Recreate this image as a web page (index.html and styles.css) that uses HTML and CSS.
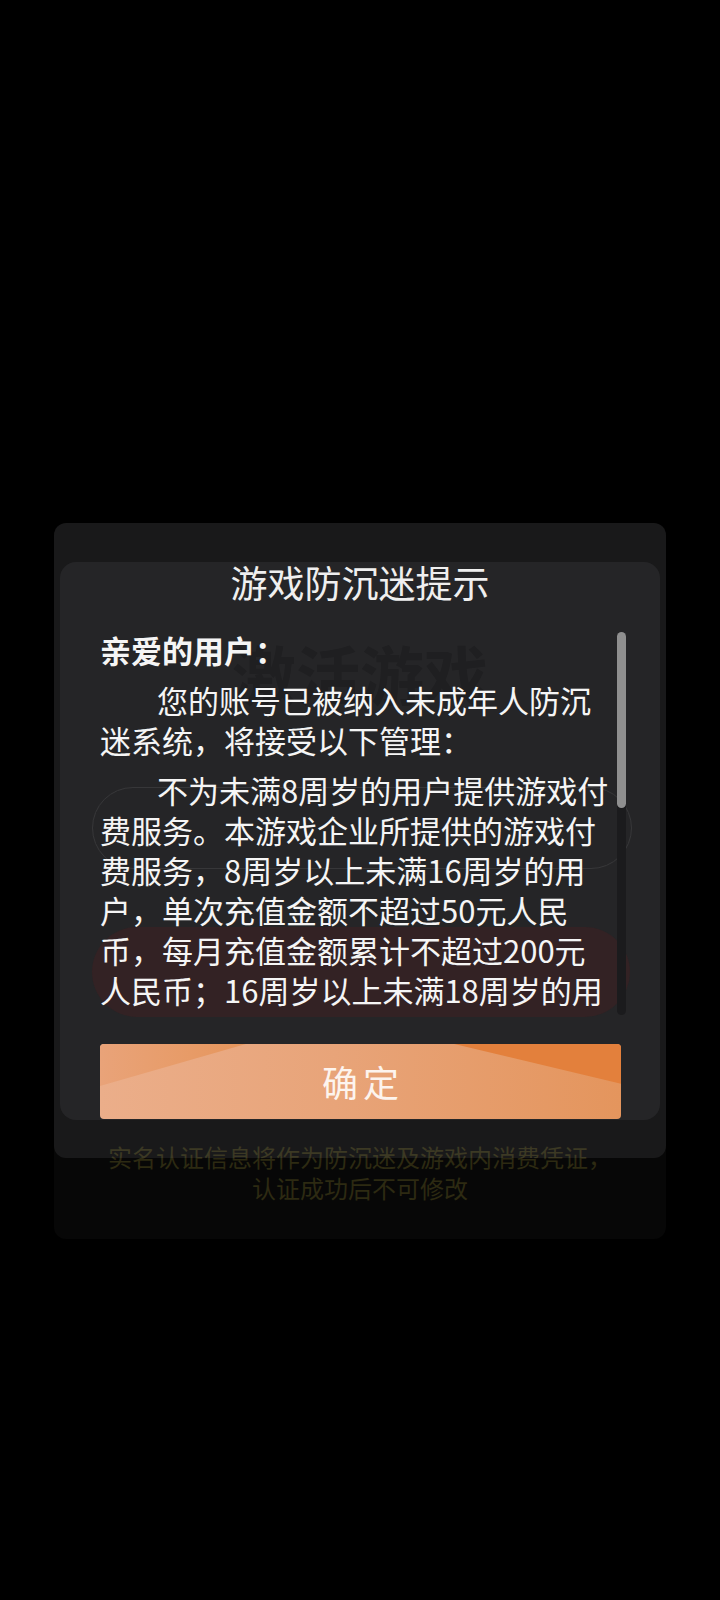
FILE: index.html
```html
<!DOCTYPE html>
<html lang="zh-CN">
<head>
<meta charset="utf-8">
<title>游戏防沉迷提示</title>
<link rel="stylesheet" href="styles.css">
</head>
<body>
<div class="screen">
  <div class="backdrop">
    <div class="bd-title">激活游戏</div>
    <div class="bd-input"></div>
    <div class="bd-pill"></div>
    <p class="bd-note">实名认证信息将作为防沉迷及游戏内消费凭证，<br>认证成功后不可修改</p>
  </div>

  <div class="dialog">
    <div class="sheet">
      <div class="sheet-title">游戏防沉迷提示</div>
      <div class="body-row">
        <div class="scroll-text">
          <p class="greet">亲爱的用户：</p>
          <p class="indent">您的账号已被纳入未成年人防沉<br>迷系统，将接受以下管理：</p>
          <p class="indent">不为未满8周岁的用户提供游戏付<br>费服务。本游戏企业所提供的游戏付<br>费服务，8周岁以上未满16周岁的用<br>户，单次充值金额不超过50元人民<br>币，每月充值金额累计不超过200元<br>人民币；16周岁以上未满18周岁的用<br>户，单次充值金额不超过100元人民<br>币，每月充值金额累计不超过400元<br>人民币。</p>
        </div>
        <div class="scrollbar"><div class="thumb"></div></div>
      </div>
      <div class="confirm"><span class="confirm-label">确定</span></div>
    </div>
  </div>
</div>
</body>
</html>
```
FILE: styles.css
```css
html, body {
  margin: 0;
  padding: 0;
  background: #000;
}

body {
  font-family: "Noto Sans CJK SC", "Noto Sans", "Liberation Sans", sans-serif;
}

.screen {
  position: relative;
  width: 720px;
  height: 1600px;
  box-sizing: border-box;
  padding-top: 523px;
  overflow: hidden;
  background: #000;
}

/* page behind the dialog */
.backdrop {
  margin: 0 54px;
  height: 716px;
  background: #070707;
  border-radius: 12px;
  display: flex;
  flex-direction: column;
  align-items: center;
}

.bd-title {
  margin-top: 111px;
  height: 76px;
  font-size: 64px;
  line-height: 76px;
  font-weight: 700;
  color: #000;
}

.bd-input {
  align-self: flex-start;
  margin: 77px 0 0 38px;
  width: 540px;
  height: 82px;
  box-sizing: border-box;
  border: 1.5px solid #1c1c1c;
  border-radius: 41px;
}

.bd-pill {
  align-self: flex-start;
  margin: 58px 0 0 38px;
  width: 538px;
  height: 90px;
  border-radius: 45px;
  background: #170404;
}

.bd-note {
  margin: 124px 0 0;
  font-size: 24px;
  line-height: 31px;
  color: #2d2a12;
  text-align: center;
}

/* dialog overlay */
.dialog {
  position: absolute;
  top: 523px;
  left: 54px;
  width: 612px;
  box-sizing: border-box;
  padding: 39px 6px 38px;
  background: rgba(245, 245, 255, 0.08);
  border-radius: 12px;
}

.sheet {
  background: rgba(245, 245, 255, 0.058);
  border-radius: 16px;
  padding-bottom: 1px;
}

.sheet-title {
  height: 40px;
  font-size: 37px;
  line-height: 40px;
  color: #efefef;
  text-align: center;
}

.body-row {
  display: flex;
  margin: 28px 34px 0 40px;
  height: 384px;
}

.scroll-text {
  flex: 1;
  min-width: 0;
  overflow: hidden;
  color: #f5f5f5;
  font-size: 31px;
  line-height: 40px;
}

.scroll-text p {
  margin: 10px 0 0;
  white-space: nowrap;
}

.scroll-text p.greet {
  margin-top: 0;
  font-weight: 700;
}

.indent {
  text-indent: 57px;
}

.scrollbar {
  flex: none;
  width: 9px;
  height: 383px;
  margin-top: 2px;
  background: #1b1b1d;
  border-radius: 4.5px;
}

.thumb {
  height: 176px;
  background: #8f8f8f;
  border-radius: 4.5px;
}

.confirm {
  position: relative;
  overflow: hidden;
  margin: 30px 39px 0 40px;
  height: 75px;
  border-radius: 4px;
  background: linear-gradient(90deg, #ebae8a 0%, #e8a479 45%, #e4955d 100%);
  text-align: center;
}

.confirm::before {
  content: "";
  position: absolute;
  inset: 0;
  background: linear-gradient(90deg, #e9a379 0%, #e6965c 28%);
  clip-path: polygon(0 0, 28% 0, 0 56%);
}

.confirm::after {
  content: "";
  position: absolute;
  inset: 0;
  background: #e3803c;
  clip-path: polygon(68% 0, 100% 0, 100% 53%);
}

.confirm-label {
  position: relative;
  z-index: 1;
  display: inline-block;
  padding-left: 5px;
  font-size: 36px;
  line-height: 75px;
  letter-spacing: 5px;
  color: #fdf4ee;
}
```
